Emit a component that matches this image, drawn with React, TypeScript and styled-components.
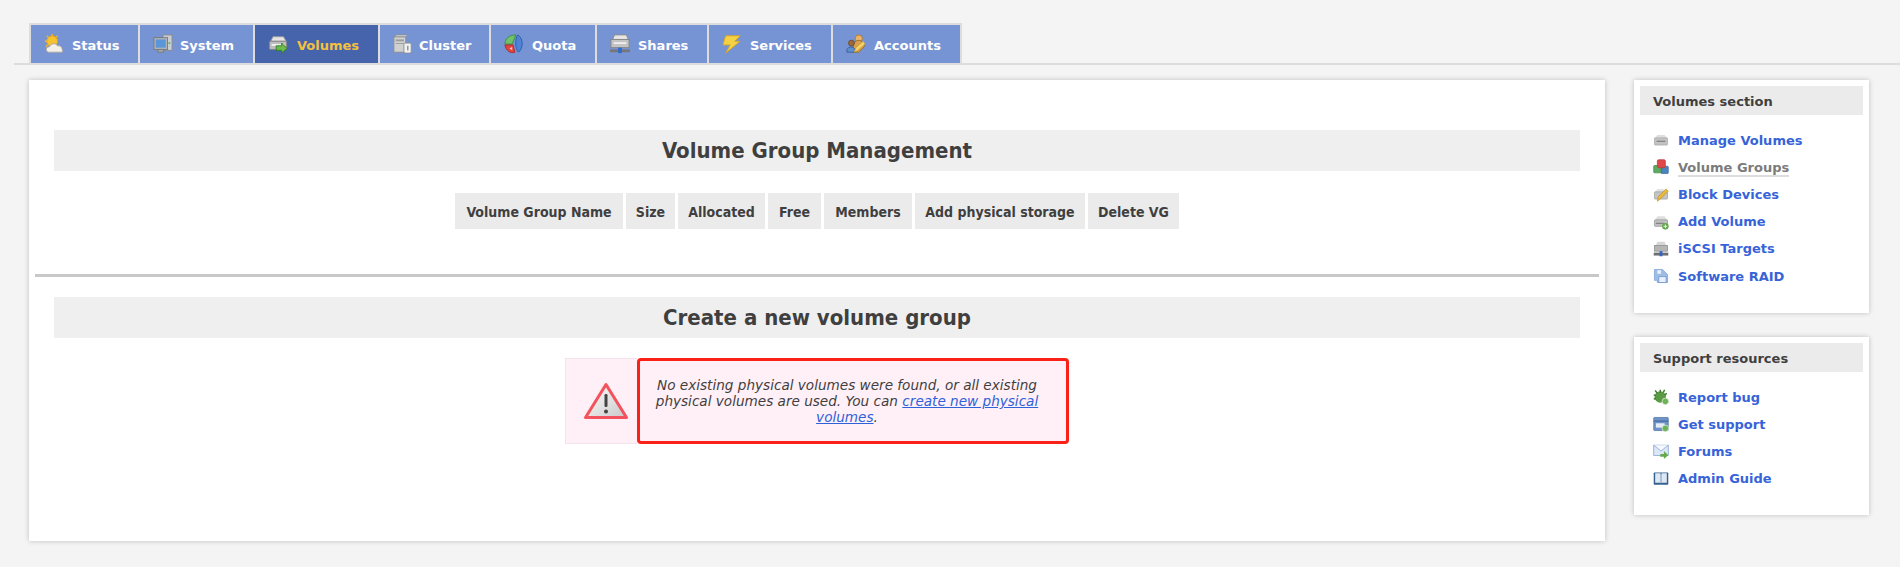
import React from "react";
import styled, { createGlobalStyle } from "styled-components";

const Global = createGlobalStyle`
  html, body { margin: 0; padding: 0; background: #f4f4f4; }
  body { font-family: "DejaVu Sans", Verdana, sans-serif; color: #3f3f3f; overflow: hidden; }
`;

const Page = styled.div`
  width: 1900px;
  height: 567px;
  padding-top: 23px;
  box-sizing: border-box;
`;

const TabBar = styled.nav`
  margin-left: 14px;
  padding-left: 15px;
  height: 42px;
  box-sizing: border-box;
  border-bottom: 2px solid #dddddd;
  display: flex;
`;

const TabList = styled.ul`
  display: flex;
  gap: 2px;
  margin: 0;
  padding: 0 2px;
  list-style: none;
  background: #dddddd;
  border-top: 2px solid #dddddd;
`;

const Tab = styled.li<{ $width: number; $gap: number; $active?: boolean }>`
  width: ${(p) => p.$width}px;
  height: 38px;
  box-sizing: border-box;
  padding-left: 13px;
  display: flex;
  align-items: center;
  gap: ${(p) => p.$gap}px;
  background: ${(p) => (p.$active ? "#4564ab" : "#7694d4")};
  color: ${(p) => (p.$active ? "#f5c13d" : "#ffffff")};
  font-size: 13px;
  font-weight: 700;
  white-space: nowrap;
  svg { flex: none; }
`;

const TabLabel = styled.span`
  padding-top: 2px;
`;

const Content = styled.div`
  display: flex;
  gap: 29px;
  margin-top: 15px;
  padding-left: 29px;
  align-items: flex-start;
`;

const Main = styled.main`
  width: 1576px;
  height: 461px;
  box-sizing: border-box;
  padding: 50px 6px 0;
  background: #ffffff;
  box-shadow: 0 0 5px rgba(0, 0, 0, 0.22);
`;

const SectionTitle = styled.h1`
  margin: 0 19px;
  height: 41px;
  background: #efefef;
  color: #3f3f3f;
  font-family: "DejaVu Sans Condensed", "DejaVu Sans", sans-serif;
  font-size: 22px;
  font-weight: 700;
  line-height: 42px;
  text-align: center;
`;

const GroupTable = styled.div`
  display: flex;
  justify-content: center;
  gap: 3px;
  margin-top: 22px;
`;

const HeadCell = styled.div<{ $width: number }>`
  width: ${(p) => p.$width}px;
  height: 36px;
  background: #ebebeb;
  color: #3f3f3f;
  font-family: "DejaVu Sans Condensed", "DejaVu Sans", sans-serif;
  font-size: 14px;
  font-weight: 700;
  line-height: 38px;
  text-align: center;
  white-space: nowrap;
`;

const Divider = styled.hr`
  height: 3px;
  margin: 45px 0 20px;
  border: 0;
  background: #c8c8c8;
`;

const WarningRow = styled.div`
  display: flex;
  justify-content: center;
  margin-top: 20px;
`;

const WarningIcon = styled.div`
  width: 72px;
  height: 86px;
  box-sizing: border-box;
  padding-left: 8px;
  display: flex;
  align-items: center;
  justify-content: center;
  background: #fff0f7;
  border: 1px solid #f5e3ec;
  border-right: 0;
`;

const WarningText = styled.div`
  width: 432px;
  height: 86px;
  box-sizing: border-box;
  padding: 0 24px 0 12px;
  display: flex;
  align-items: center;
  justify-content: center;
  background: #fff0f7;
  border: 3px solid #fa2118;
  border-radius: 4px;
  font-size: 13.6px;
  font-style: italic;
  line-height: 16px;
  text-align: center;
  a { color: #2f62d8; }
`;

const Sidebar = styled.aside`
  width: 235px;
  display: flex;
  flex-direction: column;
  gap: 24px;
`;

const Box = styled.section<{ $height: number }>`
  height: ${(p) => p.$height}px;
  box-sizing: border-box;
  padding: 6px;
  background: #ffffff;
  box-shadow: 0 0 5px rgba(0, 0, 0, 0.22);
`;

const BoxHead = styled.h3`
  margin: 0;
  height: 29px;
  padding-left: 13px;
  background: #ebebeb;
  color: #3f3f3f;
  font-size: 13px;
  font-weight: 700;
  line-height: 31px;
`;

const LinkList = styled.ul`
  margin: 11.5px 0 0;
  padding: 0 0 0 13px;
  list-style: none;
`;

const LinkItem = styled.li`
  height: 27.2px;
  display: flex;
  align-items: center;
  gap: 9px;
  svg { flex: none; }
`;

const SideLink = styled.a<{ $current?: boolean }>`
  color: ${(p) => (p.$current ? "#7b7b7b" : "#3763d8")};
  font-size: 13px;
  font-weight: 700;
  line-height: 15px;
  border-bottom: ${(p) => (p.$current ? "2px solid #dddddd" : "0")};
  margin-top: ${(p) => (p.$current ? "2px" : "0")};
`;

const Ico: React.FC<{ s?: number; children: React.ReactNode }> = ({ s = 20, children }) => (
  <svg width={s} height={s} viewBox="0 0 22 22">{children}</svg>
);

const Drive = () => (
  <>
    <path d="M3 8 L5.5 3 H17 L20 8 Z" fill="#e4e4e4" stroke="#9a9a9a" />
    <rect x="1.5" y="8" width="19" height="9" rx="1.5" fill="#bdbdbd" stroke="#858585" />
    <rect x="4" y="11" width="14" height="2" fill="#f2f2f2" />
  </>
);

const Sun = () => (
  <Ico>
    <circle cx="9" cy="8" r="6" fill="#f6c32f" stroke="#e5991b" />
    <path d="M9 0v3M1 8h3M3 2l2 2M15 2l-2 2M2 14l2-2" stroke="#eeb52a" strokeWidth="1.5" />
    <path d="M5 20 a3 3 0 0 1 1-6 a5 5 0 0 1 9-1 a4 4 0 0 1 5 4 a2.5 2.5 0 0 1 0 3 Z" fill="#f3f0e8" stroke="#a9a6a0" />
  </Ico>
);
const Monitor = () => (
  <Ico>
    <rect x="11" y="1" width="10" height="17" fill="#c9ccd0" stroke="#85898f" />
    <rect x="17" y="9" width="2" height="2" fill="#55c255" />
    <rect x="1" y="4" width="15" height="13" fill="#aeb4ba" stroke="#74797f" />
    <rect x="3" y="6" width="11" height="9" fill="#5b96d8" />
    <path d="M6 17h5l1 3H5z" fill="#a5a9ae" stroke="#74797f" />
  </Ico>
);
const DriveArrow = () => (
  <Ico>
    <Drive />
    <path d="M9 13h6v-3l6 6-6 5v-3H9z" fill="#6cbb4c" stroke="#2f7f25" strokeWidth="1" />
  </Ico>
);
const ClusterIco = () => (
  <Ico>
    <rect x="1" y="3" width="13" height="17" fill="#cfd0d0" stroke="#8b8d8f" />
    <path d="M1 3l3-2h12l-2 2z" fill="#e6e6e6" stroke="#8b8d8f" />
    <rect x="3" y="6" width="9" height="2" fill="#9a9c9e" />
    <rect x="3" y="10" width="9" height="1" fill="#9a9c9e" />
    <rect x="12" y="10" width="8" height="11" rx="1.5" fill="#f2f2f2" stroke="#8b8d8f" />
    <rect x="15.5" y="13" width="1.5" height="5" fill="#8b8d8f" />
  </Ico>
);
const QuotaIco = () => (
  <Ico>
    <path d="M1 11 C1 6 5 1 13 1 L9 11 Z" fill="#6fc26a" stroke="#3e8f3b" />
    <path d="M1 12 H10 L12 20 C7 22 2 18 1 12 Z" fill="#e2433f" stroke="#aa2a28" />
    <path d="M15 1 C21 4 22 15 16 20 C12 16 12 6 15 1 Z" fill="#4e83d8" stroke="#2f5aa8" />
    <path d="M9 14l-3 2 3 2z" fill="#f7c3c0" />
  </Ico>
);
const SharesIco = () => (
  <Ico>
    <path d="M3 6 L5 1 H18 L20 6 Z" fill="#e6e6e6" stroke="#8e8e8e" />
    <rect x="1" y="6" width="20" height="9" fill="#c4c4c4" stroke="#858585" />
    <rect x="4" y="9" width="14" height="2" fill="#efefef" />
    <rect x="0" y="17" width="22" height="3" fill="#777" />
    <rect x="9" y="15" width="4" height="6" fill="#2e6ad1" />
  </Ico>
);
const BoltIco = () => (
  <Ico>
    <path d="M4 2 H20 L14 8 H20 L4 21 L9 12 H1 Z" fill="#f5d243" stroke="#d8a520" />
  </Ico>
);
const AccountsIco = () => (
  <Ico>
    <circle cx="14" cy="5" r="4" fill="#e8b46a" stroke="#b2772a" />
    <path d="M8 20v-7a6 6 0 0 1 12 0v1l-6 6z" fill="#d9a04f" stroke="#9c6a2a" />
    <circle cx="6" cy="10" r="3.2" fill="#9a6a3c" stroke="#6f4a28" />
    <path d="M1 20v-3a5 5 0 0 1 9 0v3z" fill="#5b8fd0" stroke="#3a5f95" />
    <path d="M9 20l2-5 8-7 2 3-8 7z" fill="#f4d46a" stroke="#c99b2c" strokeWidth=".7" />
  </Ico>
);

const DriveSm = () => (
  <Ico s={16}>
    <path d="M3 8 L6 4 H16 L19 8 Z" fill="#dedede" />
    <rect x="2" y="8" width="18" height="10" rx="1" fill="#c2c2c2" stroke="#a9a9a9" />
    <rect x="5" y="12" width="12" height="1.6" fill="#7f7f7f" />
  </Ico>
);
const CubesSm = () => (
  <Ico s={16}>
    <rect x="11" y="10" width="10" height="10" rx="1" fill="#4d83bd" stroke="#3a6a9f" />
    <rect x="1" y="9" width="10" height="10" rx="1" fill="#5faa62" stroke="#3f8a44" />
    <rect x="6" y="1" width="11" height="11" rx="2" fill="#e0474a" stroke="#b8393a" />
  </Ico>
);
const PencilDriveSm = () => (
  <Ico s={16}>
    <path d="M3 8 L6 4 H15 L19 8 Z" fill="#e2e2e2" />
    <rect x="2" y="8" width="18" height="10" rx="1" fill="#c4c4c4" stroke="#a0a0a0" />
    <path d="M6 21l1-6 11-11 3 3-11 11z" fill="#e9b93a" stroke="#b58a20" strokeWidth=".8" />
  </Ico>
);
const AddDriveSm = () => (
  <Ico s={16}>
    <path d="M3 8 L6 3 H16 L19 8 Z" fill="#dedede" />
    <rect x="2" y="8" width="18" height="9" rx="1" fill="#bfbfbf" stroke="#969696" />
    <rect x="4" y="12" width="11" height="1.6" fill="#7f7f7f" />
    <circle cx="17" cy="17" r="4.5" fill="#63a94d" />
    <path d="M14.5 17h5M17 14.5v5" stroke="#e6f5de" strokeWidth="1.3" />
  </Ico>
);
const IscsiSm = () => (
  <Ico s={16}>
    <path d="M4 6 L6 1 H16 L18 6 Z" fill="#d6d6d6" />
    <rect x="2" y="6" width="18" height="8" fill="#b5b5b5" stroke="#8a8a8a" />
    <rect x="1" y="16" width="20" height="4" fill="#6e6e6e" />
    <rect x="9" y="14" width="4" height="7" fill="#3565c4" />
  </Ico>
);
const RaidSm = () => (
  <Ico s={16}>
    <path d="M2 2 H13 L20 9 V20 H6 V17 H2 Z" fill="#9dbce6" stroke="#7b9ed2" />
    <rect x="8" y="12" width="10" height="8" fill="#e8f0fb" stroke="#6b8fca" />
    <rect x="6" y="3" width="5" height="5" fill="#e8f0fb" />
  </Ico>
);
const BugSm = () => (
  <Ico s={16}>
    <circle cx="10" cy="11" r="8" fill="#5b9a44" />
    <path d="M10 1v4M3 2l3 4M16 1l-2 4M1 8l3 1M1 14l3-1M19 6l-3 2" stroke="#3e7d2e" strokeWidth="2" />
    <circle cx="17" cy="17" r="4.5" fill="#6db158" stroke="#e8f3e2" />
  </Ico>
);
const SupportSm = () => (
  <Ico s={16}>
    <rect x="1" y="2" width="20" height="18" rx="1" fill="#6f93c6" stroke="#4d72a8" />
    <rect x="1" y="6" width="20" height="2" fill="#4d72a8" />
    <rect x="4" y="10" width="12" height="6" fill="#e4ecf7" />
    <circle cx="17" cy="17" r="4.5" fill="#6db158" stroke="#e8f3e2" />
  </Ico>
);
const MailSm = () => (
  <Ico s={16}>
    <rect x="1" y="3" width="20" height="14" fill="#dbe6f6" stroke="#7f9fcc" />
    <path d="M1 3l10 8 10-8" fill="#f6f9ff" stroke="#7f9fcc" />
    <path d="M10 15h5v-4l6 6-6 5v-3h-5z" fill="#65a94a" />
  </Ico>
);
const BookSm = () => (
  <Ico s={16}>
    <rect x="1" y="2" width="20" height="17" rx="1" fill="#34618f" />
    <path d="M3 3h7l1 2 1-2h7v13h-7l-1 1-1-1H3z" fill="#dfe8f2" />
    <rect x="10.4" y="4" width="1.2" height="13" fill="#6b8fb4" />
  </Ico>
);

const tabs = [
  { label: "Status", width: 107, gap: 8, icon: <Sun /> },
  { label: "System", width: 113, gap: 7, icon: <Monitor /> },
  { label: "Volumes", width: 123, gap: 9, icon: <DriveArrow />, active: true },
  { label: "Cluster", width: 109, gap: 6, icon: <ClusterIco /> },
  { label: "Quota", width: 104, gap: 8, icon: <QuotaIco /> },
  { label: "Shares", width: 110, gap: 8, icon: <SharesIco /> },
  { label: "Services", width: 122, gap: 8, icon: <BoltIco /> },
  { label: "Accounts", width: 127, gap: 8, icon: <AccountsIco /> },
];

const columns = [
  { label: "Volume Group Name", width: 168 },
  { label: "Size", width: 49 },
  { label: "Allocated", width: 87 },
  { label: "Free", width: 53 },
  { label: "Members", width: 88 },
  { label: "Add physical storage", width: 170 },
  { label: "Delete VG", width: 91 },
];

const volumeLinks = [
  { label: "Manage Volumes", icon: <DriveSm /> },
  { label: "Volume Groups", icon: <CubesSm />, current: true },
  { label: "Block Devices", icon: <PencilDriveSm /> },
  { label: "Add Volume", icon: <AddDriveSm /> },
  { label: "iSCSI Targets", icon: <IscsiSm /> },
  { label: "Software RAID", icon: <RaidSm /> },
];

const supportLinks = [
  { label: "Report bug", icon: <BugSm /> },
  { label: "Get support", icon: <SupportSm /> },
  { label: "Forums", icon: <MailSm /> },
  { label: "Admin Guide", icon: <BookSm /> },
];

export default function App() {
  return (
    <Page>
      <Global />
      <TabBar>
        <TabList>
          {tabs.map((t) => (
            <Tab key={t.label} $width={t.width} $gap={t.gap} $active={t.active}>
              {t.icon}
              <TabLabel>{t.label}</TabLabel>
            </Tab>
          ))}
        </TabList>
      </TabBar>
      <Content>
        <Main>
          <SectionTitle>Volume Group Management</SectionTitle>
          <GroupTable>
            {columns.map((c) => (
              <HeadCell key={c.label} $width={c.width}>{c.label}</HeadCell>
            ))}
          </GroupTable>
          <Divider />
          <SectionTitle>Create a new volume group</SectionTitle>
          <WarningRow>
            <WarningIcon>
              <svg width="46" height="38" viewBox="0 0 46 38">
                <defs>
                  <linearGradient id="warnFill" x1="0" y1="0" x2="1" y2="1">
                    <stop offset="0" stopColor="#ffffff" />
                    <stop offset="1" stopColor="#c9c9c9" />
                  </linearGradient>
                </defs>
                <path d="M23 2.5 L43.5 35.5 H2.5 Z" fill="url(#warnFill)" stroke="#f4525c" strokeWidth="3" strokeLinejoin="round" />
                <rect x="21.5" y="12" width="3" height="13" rx="1.2" fill="#444" />
                <circle cx="23" cy="29.5" r="2" fill="#444" />
              </svg>
            </WarningIcon>
            <WarningText>
              <span>
                No existing physical volumes were found, or all existing physical volumes are used. You can{" "}
                <a href="#create">create new physical volumes</a>.
              </span>
            </WarningText>
          </WarningRow>
        </Main>
        <Sidebar>
          <Box $height={233}>
            <BoxHead>Volumes section</BoxHead>
            <LinkList>
              {volumeLinks.map((l) => (
                <LinkItem key={l.label}>
                  {l.icon}
                  <SideLink $current={l.current}>{l.label}</SideLink>
                </LinkItem>
              ))}
            </LinkList>
          </Box>
          <Box $height={178}>
            <BoxHead>Support resources</BoxHead>
            <LinkList>
              {supportLinks.map((l) => (
                <LinkItem key={l.label}>
                  {l.icon}
                  <SideLink>{l.label}</SideLink>
                </LinkItem>
              ))}
            </LinkList>
          </Box>
        </Sidebar>
      </Content>
    </Page>
  );
}
